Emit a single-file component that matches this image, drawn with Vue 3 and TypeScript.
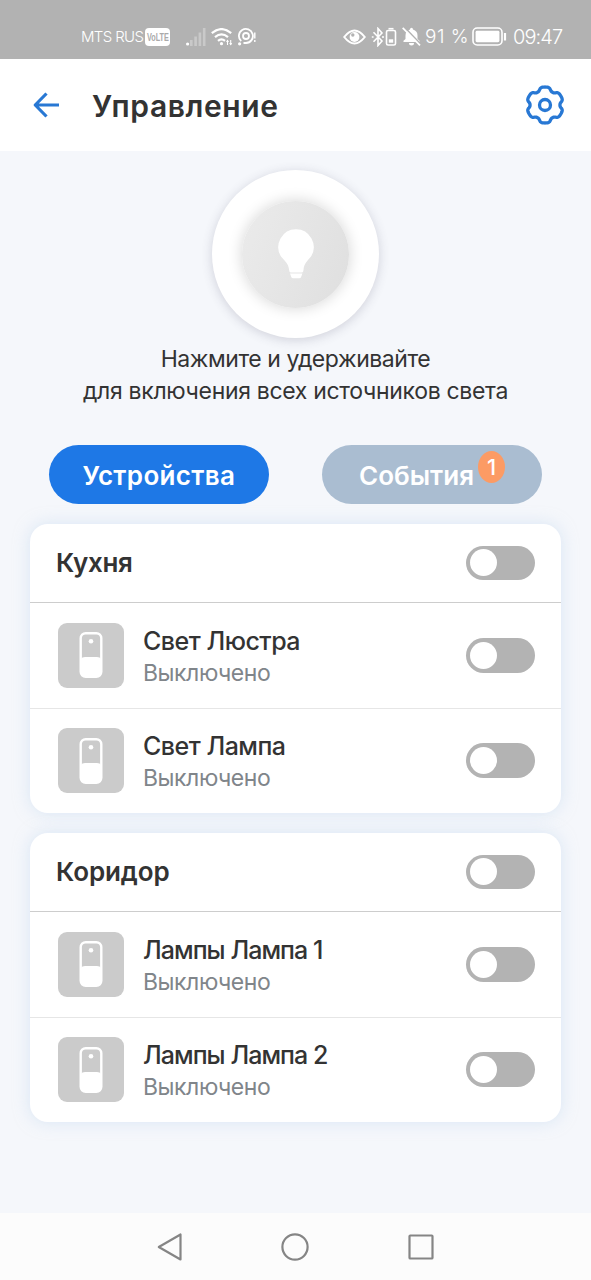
<script setup lang="ts">
interface Device { name: string; status: string }
interface Room { title: string; tight: boolean; devices: Device[] }

const rooms: Room[] = [
  { title: 'Кухня', tight: false, devices: [
    { name: 'Свет Люстра', status: 'Выключено' },
    { name: 'Свет Лампа', status: 'Выключено' },
  ] },
  { title: 'Коридор', tight: true, devices: [
    { name: 'Лампы Лампа 1', status: 'Выключено' },
    { name: 'Лампы Лампа 2', status: 'Выключено' },
  ] },
]

// Six-lobed gear outline around the centre of a 40x40 box: broad lobes, narrow notches
const gearPath: string = Array.from({ length: 144 }, (_, i) => {
  const a = (i / 144) * Math.PI * 2
  const wave = Math.cos(6 * (a - Math.PI / 2))
  const r = 16.1 + 1.9 * Math.tanh(1.8 * wave + 0.8)
  const x = 20 + r * 1.02 * Math.cos(a)
  const y = 20 + r * Math.sin(a)
  return `${i ? 'L' : 'M'}${x.toFixed(2)} ${y.toFixed(2)}`
}).join('') + 'Z'
</script>

<template>
  <div class="screen">
    <div class="status">
      <span class="carrier">MTS RUS</span>
      <span class="volte"><b>VoLTE</b></span>
      <svg class="signal" width="20" height="18" viewBox="0 0 20 18">
        <circle cx="1.6" cy="16" r="1.6" fill="#fff" />
        <g fill="#fff" opacity=".3"><rect x="4" y="12" width="2.6" height="6" /><rect x="8.3" y="8.5" width="2.6" height="9.5" /><rect x="12.6" y="4.5" width="2.6" height="13.5" /><rect x="16.9" y="0" width="2.6" height="18" /></g>
      </svg>
      <svg class="wifi" width="22" height="18" viewBox="0 0 22 18" fill="none" stroke="#fff" stroke-width="2.2">
        <path d="M.8 5.2Q10.5-3 20.2 5.2M4 9.2Q10.5 3.6 17 9.2M7 12.8Q10.5 9.8 14 12.8" />
        <circle cx="10.5" cy="15.7" r="1.6" fill="#fff" stroke="none" />
        <path d="M16.5 17v-5M19.7 12v5" stroke-width="1.1" /><path d="M15 14l1.5-2.4L18 14zM18.2 15l1.5 2.4 1.5-2.4z" fill="#fff" stroke="none" />
      </svg>
      <svg class="hotspot" width="20" height="18" viewBox="0 0 20 18" fill="none" stroke="#fff" stroke-width="1.8">
        <path d="M4.2 13.2A7 7 0 1 1 9 15H6.5" /><circle cx="9" cy="8" r="3" /><circle cx="2.6" cy="15.8" r="1.6" fill="#fff" stroke="none" />
        <path d="M17.8 4.5v6M17.8 12v2" stroke-width="1.4" />
      </svg>
      <svg class="eye" width="23" height="16" viewBox="0 0 23 16">
        <path d="M1.2 8Q11.5-5 21.8 8 11.5 21 1.2 8Z" fill="none" stroke="#fff" stroke-width="2" />
        <circle cx="11.5" cy="8" r="4.9" fill="#fff" /><circle cx="9.8" cy="6" r="1.7" fill="#b2b2b2" />
      </svg>
      <svg class="bt" width="26" height="20" viewBox="0 0 26 20" fill="none" stroke="#fff" stroke-width="1.6">
        <path d="M2.5 5.2L11 14 7 18.5V1.5L11 6 2.5 14.8" />
        <path d="M.8 10h1.8M11 10h2" />
        <rect x="15.5" y="3.5" width="9" height="14.5" rx="1.6" /><path d="M17.5 1.7h5" /><rect x="17.8" y="12.3" width="4.4" height="3.4" fill="#fff" stroke="none" />
      </svg>
      <svg class="bell" width="19" height="19" viewBox="0 0 19 19">
        <path d="M1.500 15V13.700L3.500 12V8.500Q3.500 4 8 2.600 8 .8 9.500.8T11 2.600Q15.500 4 15.500 8.500V12L17.500 13.700V15ZM7 16h5Q12 18.500 9.500 18.500T7 16Z" fill="#fff" />
        <path d="M2-.2L19.200 17.600" stroke="#b2b2b2" stroke-width="1.600" /><path d="M.7.8L18 18.400" stroke="#fff" stroke-width="1.700" />
      </svg>
      <span class="pct">91 %</span>
      <svg class="batt" width="36" height="19" viewBox="0 0 36 19">
        <rect x="1" y="1" width="29" height="17" rx="4.2" fill="none" stroke="#fff" stroke-width="1.6" /><rect x="3.6" y="3.8" width="23.8" height="11.4" rx="1.4" fill="#fff" />
        <path d="M33 6v7.5" stroke="#fff" stroke-width="2.2" />
      </svg>
      <span class="time">09:47</span>
    </div>

    <header class="bar">
      <svg width="28" height="28" viewBox="0 0 28 28" fill="none" stroke="#2878d4" stroke-width="3.2" stroke-linejoin="round">
        <path d="M27 14H3.500M14.500 2.500L3.200 14l11.300 11.500" />
      </svg>
      <h1>Управление</h1>
      <svg width="40" height="40" viewBox="0 0 40 40" fill="none" stroke="#2878d4" stroke-width="3.3">
        <path :d="gearPath" stroke-linejoin="round" /><circle cx="20" cy="20" r="5.5" />
      </svg>
    </header>

    <main>
      <button class="master">
        <span class="core">
          <svg width="36" height="50" viewBox="0 0 36 50">
            <path d="M18 .3A17.800 17.800 0 0 1 33 27.500C29.500 32 25.900 34.500 25.500 41Q25.400 43.600 23.800 43.600H12.800Q11.200 43.600 11.100 41C10.700 34.500 6.500 32 3 27.500A17.800 17.800 0 0 1 18 .3Z" fill="#fff" />
            <path d="M12 44.600H24.400L23 48.200Q22.600 49.300 21.400 49.300H15Q13.800 49.300 13.400 48.200Z" fill="#fff" />
          </svg>
        </span>
      </button>
      <p class="hint"><span class="first">Нажмите и удерживайте</span><br><span>для включения всех источников света</span></p>

      <nav class="tabs">
        <button class="tab active">Устройства</button>
        <button class="tab events">События<span class="badge">1</span></button>
      </nav>

      <section v-for="room in rooms" :key="room.title" class="card" :class="{ tight: room.tight }">
        <div class="head"><h2>{{ room.title }}</h2><span class="switch"><i></i></span></div>
        <div v-for="d in room.devices" :key="d.name" class="row">
          <span class="tile">
            <svg width="24" height="46" viewBox="0 0 24 46">
              <rect x="1.7" y="1.2" width="20.6" height="43.6" rx="5" fill="none" stroke="#fff" stroke-width="2.4" />
              <path d="M2 27Q3 25 6 25H18Q21 25 22 27V40Q22 44.500 17.500 44.500H6.500Q2 44.500 2 40Z" fill="#fff" />
              <circle cx="12" cy="9.2" r="2.3" fill="#fff" />
            </svg>
          </span>
          <div class="info"><div class="name">{{ d.name }}</div><div class="state">{{ d.status }}</div></div>
          <span class="switch"><i></i></span>
        </div>
      </section>
    </main>

    <footer class="nav">
      <svg width="26" height="30" viewBox="0 0 26 30"><path d="M23.500 2.500V27.500L1.800 15Z" /></svg>
      <svg width="28" height="28" viewBox="0 0 28 28"><circle cx="14" cy="14" r="12.6" /></svg>
      <svg width="26" height="26" viewBox="0 0 26 26"><rect x="1.5" y="1.5" width="23" height="23" rx=".8" /></svg>
    </footer>
  </div>
</template>

<style>
body { margin: 0; background: #f5f7fb; }
</style>

<style scoped>
.screen { width: 591px; height: 1280px; display: flex; flex-direction: column; overflow: hidden; background: #f5f7fb; font-family: Inter, "Noto Sans", sans-serif; color: #333; }
.screen * { box-sizing: border-box; }
.status { height: 59px; flex: none; background: #b2b2b2; color: #fff; display: flex; align-items: center; padding: 14px 0 0 81px; white-space: nowrap; }
.status svg, .status span { flex: none; }
.carrier { width: 64px; font-size: 15px; font-weight: 300; letter-spacing: -.65px; }
.volte { width: 25px; height: 18px; border-radius: 4px; background: #fff; color: #aaa; display: flex; align-items: center; justify-content: center; }
.volte b { font: 700 10.5px/18px "Liberation Sans", sans-serif; transform: scaleX(.69); }
.signal { margin-left: 16px; }
.wifi { margin-left: 5px; }
.hotspot { margin-left: 4px; }
.eye { margin-left: 86px; }
.bt { margin-left: 5px; }
.bell { margin-left: 5px; }
.pct { width: 47px; margin-left: 4px; font-size: 19px; font-weight: 300; letter-spacing: .5px; }
.batt { width: 36px; }
.time { margin-left: 5px; font-size: 20px; font-weight: 300; letter-spacing: -.9px; }
.bar { height: 92px; flex: none; background: #fff; display: flex; align-items: center; padding: 0 26px 0 32px; }
h1 { margin: 2px 0 0 32px; flex: 1; font-size: 30px; line-height: 36px; font-weight: 600; letter-spacing: .6px; }
main { flex: 1; padding: 19px 30px 0; }
.master { display: flex; align-items: center; justify-content: center; width: 167px; height: 168px; margin: 0 auto; padding: 0; border: 0; border-radius: 50%; background: #fff; box-shadow: 0 2px 11px rgba(60, 60, 90, .2); }
.core { display: flex; align-items: center; justify-content: center; width: 107px; height: 107px; border-radius: 50%; background: linear-gradient(110deg, #ebebeb, #dfdfdf); box-shadow: 0 0 14px 1px rgba(0, 0, 0, .15); }
.hint { margin: 5px -20px 38px; font-size: 23px; line-height: 32px; text-align: center; letter-spacing: -.32px; }
.first { letter-spacing: -.45px; }
.tabs { display: flex; justify-content: space-between; padding: 0 19px; margin-bottom: 19.5px; }
.tab { width: 220px; height: 59px; border: 0; border-radius: 30px; padding: 2px 0 0; background: #aabdd1; color: #fff; font: 600 26px/32px Inter, sans-serif; position: relative; }
.active { background: #1e78e6; letter-spacing: .35px; }
.events { padding-right: 31px; }
.badge { position: absolute; left: 156px; top: 6px; width: 27px; height: 32px; border-radius: 50%; background: #fc9b64; font: 500 22px/32px Inter, sans-serif; text-align: center; }
.card { height: 289.5px; margin-bottom: 19.5px; border-radius: 18px; background: #fff; box-shadow: 0 0 16px rgba(190, 213, 240, .5); }
.head { height: 79px; display: flex; align-items: center; justify-content: space-between; padding: 0 26px; border-bottom: 1px solid #cdcdcd; }
h2 { margin: 0; font-size: 26px; line-height: 32px; font-weight: 600; letter-spacing: -.3px; }
.tight h2 { letter-spacing: -.1px; }
.row { height: 105.5px; display: flex; align-items: center; padding: 0 26px 0 28px; }
.row + .row { height: 104.5px; border-top: 1px solid #e6e6e6; }
.tile { width: 66px; height: 65px; border-radius: 9px; background: #cbcbcb; display: flex; align-items: center; justify-content: center; }
.info { flex: 1; margin-left: 19px; padding-top: 3px; }
.name { font-size: 25px; line-height: 32px; font-weight: 500; letter-spacing: -.5px; }
.tight .name { letter-spacing: -.95px; }
.state { font-size: 23px; line-height: 32px; color: #80858a; letter-spacing: -.45px; }
.switch { width: 69px; height: 34px; border-radius: 17px; background: #b3b3b3; display: flex; align-items: center; padding-left: 4px; }
.row .switch { height: 35px; border-radius: 18px; }
.switch i { width: 27px; height: 27px; border-radius: 50%; background: #fff; }
.nav { height: 67px; flex: none; background: #fcfcfc; display: flex; align-items: center; justify-content: space-between; padding: 0 157.5px 0 156.5px; }
.nav svg { fill: none; stroke: #858585; stroke-width: 2.2; stroke-linejoin: round; }
</style>
